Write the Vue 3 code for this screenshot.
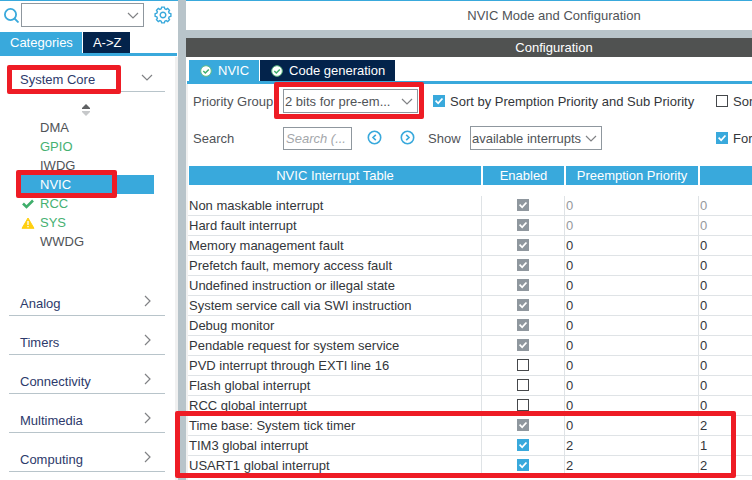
<script setup>
import { ref } from 'vue'

const coreItems = [
  { name: 'DMA' },
  { name: 'GPIO', used: true },
  { name: 'IWDG' },
  { name: 'NVIC', selected: true },
  { name: 'RCC', used: true, icon: 'ok' },
  { name: 'SYS', used: true, icon: 'warn' },
  { name: 'WWDG' },
]
const groups = ['Analog', 'Timers', 'Connectivity', 'Multimedia', 'Computing']

const rows = ref([
  { name: 'Non maskable interrupt', on: true, locked: true, pre: 0, sub: 0, fixed: true },
  { name: 'Hard fault interrupt', on: true, locked: true, pre: 0, sub: 0, fixed: true },
  { name: 'Memory management fault', on: true, locked: true, pre: 0, sub: 0 },
  { name: 'Prefetch fault, memory access fault', on: true, locked: true, pre: 0, sub: 0 },
  { name: 'Undefined instruction or illegal state', on: true, locked: true, pre: 0, sub: 0 },
  { name: 'System service call via SWI instruction', on: true, locked: true, pre: 0, sub: 0 },
  { name: 'Debug monitor', on: true, locked: true, pre: 0, sub: 0 },
  { name: 'Pendable request for system service', on: true, locked: true, pre: 0, sub: 0 },
  { name: 'PVD interrupt through EXTI line 16', on: false, pre: 0, sub: 0 },
  { name: 'Flash global interrupt', on: false, pre: 0, sub: 0 },
  { name: 'RCC global interrupt', on: false, pre: 0, sub: 0 },
  { name: 'Time base: System tick timer', on: true, locked: true, pre: 0, sub: 2 },
  { name: 'TIM3 global interrupt', on: true, pre: 2, sub: 1 },
  { name: 'USART1 global interrupt', on: true, pre: 2, sub: 2 },
])
const sortPriority = ref(true)
const sortName = ref(false)
const force = ref(true)
</script>

<template>
  <div class="app">
    <aside class="side">
      <div class="finder">
        <svg class="lens" viewBox="0 0 15 15" aria-hidden="true">
          <circle cx="6.5" cy="6.5" r="5.6" />
          <path d="M10.5 10.5 L14.5 14.5" />
        </svg>
        <div class="drop find">
          <select aria-label="Find peripheral"><option></option></select>
          <svg class="chev" viewBox="0 0 12 7" aria-hidden="true"><path d="M1 1 L6 6 L11 1" /></svg>
        </div>
        <button class="gear" aria-label="Settings">
          <svg viewBox="-9 -9 18 18" aria-hidden="true">
            <path d="M-1.3 -7.9 L1.3 -7.9 L1.8 -6.2 L3.2 -5.6 L4.7 -6.5 L6.5 -4.7 L5.6 -3.2 L6.2 -1.8 L7.9 -1.3 L7.9 1.3 L6.2 1.8 L5.6 3.2 L6.5 4.7 L4.7 6.5 L3.2 5.6 L1.8 6.2 L1.3 7.9 L-1.3 7.9 L-1.8 6.2 L-3.2 5.6 L-4.7 6.5 L-6.5 4.7 L-5.6 3.2 L-6.2 1.8 L-7.9 1.3 L-7.9 -1.3 L-6.2 -1.8 L-5.6 -3.2 L-6.5 -4.7 L-4.7 -6.5 L-3.2 -5.6 L-1.8 -6.2 Z" />
            <circle r="2.8" />
          </svg>
        </button>
      </div>
      <div class="tabs side-tabs">
        <button class="tab active">Categories</button>
        <button class="tab">A-&gt;Z</button>
      </div>
      <nav class="tree">
        <button class="group">
          <span>System Core</span>
          <svg class="chev" viewBox="0 0 12 7" aria-hidden="true"><path d="M1 1 L6 6 L11 1" /></svg>
          <i class="mark mark-core"></i>
        </button>
        <div class="sorter">
          <svg viewBox="0 0 10 12" aria-hidden="true">
            <path d="M5 0 L9 4 V5 H1 V4 Z" fill="#5f6163" />
            <path d="M5 12 L9 8 V7 H1 V8 Z" fill="#c6c8ca" />
          </svg>
        </div>
        <ul class="items">
          <li v-for="it in coreItems" :key="it.name" :class="{ used: it.used, selected: it.selected }">
            <span class="state">
              <svg v-if="it.icon === 'ok'" viewBox="0 0 14 12" aria-hidden="true">
                <path d="M2 5.5 L5.5 9 L12 2.5" fill="none" stroke="#3fae6b" stroke-width="2.6" />
              </svg>
              <svg v-if="it.icon === 'warn'" viewBox="0 0 14 12" aria-hidden="true">
                <path d="M7 1 L13 11.3 H1 Z" fill="#ffcf10" stroke="#ffcf10" stroke-linejoin="round" />
                <path d="M7 4 V8 M7 9 V10.3" stroke="#fff" stroke-width="1.3" />
              </svg>
            </span>
            <a href="#">{{ it.name }}</a>
            <i v-if="it.selected" class="mark mark-item"></i>
          </li>
        </ul>
        <button v-for="g in groups" :key="g" class="group closed">
          <span>{{ g }}</span>
          <svg class="chev-r" viewBox="0 0 7 12" aria-hidden="true"><path d="M1 1 L6 6 L1 11" /></svg>
        </button>
      </nav>
    </aside>
    <div class="splitter"></div>
    <main class="main">
      <h1 class="title">NVIC Mode and Configuration</h1>
      <h2 class="subtitle">Configuration</h2>
      <div class="tabs main-tabs">
        <button v-for="(t, i) in ['NVIC', 'Code generation']" :key="t" class="tab" :class="{ active: i === 0 }">
          <svg class="badge" viewBox="0 0 12 12" aria-hidden="true">
            <circle cx="6" cy="6" r="5.3" fill="#fff" stroke="#62bd83" />
            <path d="M3.3 6 L5.3 8 L8.8 4.4" fill="none" stroke="#3fae6b" stroke-width="1.5" />
          </svg>
          {{ t }}
        </button>
      </div>
      <section class="content">
        <div class="toolbar">
          <label class="name" for="group">Priority Group</label>
          <div class="cell">
            <div class="drop prio">
              <select id="group"><option>2 bits for pre-em...</option></select>
              <svg class="chev" viewBox="0 0 12 7" aria-hidden="true"><path d="M1 1 L6 6 L11 1" /></svg>
              <i class="mark mark-prio"></i>
            </div>
            <label class="check"><input v-model="sortPriority" type="checkbox" />Sort by Premption Priority and Sub Priority</label>
          </div>
          <label class="check"><input v-model="sortName" type="checkbox" />Sor</label>

          <label class="name" for="search">Search</label>
          <div class="cell">
            <input id="search" class="search" type="text" placeholder="Search (..." />
            <div class="steps">
              <button aria-label="Previous">
                <svg viewBox="0 0 15 15" aria-hidden="true"><circle cx="7.5" cy="7.5" r="6.2" /><path d="M8.8 4.8 L6 7.5 L8.8 10.2" /></svg>
              </button>
              <button aria-label="Next">
                <svg viewBox="0 0 15 15" aria-hidden="true"><circle cx="7.5" cy="7.5" r="6.2" /><path d="M6.2 4.8 L9 7.5 L6.2 10.2" /></svg>
              </button>
            </div>
            <label class="show" for="show">Show</label>
            <div class="drop avail">
              <select id="show"><option>available interrupts</option></select>
              <svg class="chev" viewBox="0 0 12 7" aria-hidden="true"><path d="M1 1 L6 6 L11 1" /></svg>
            </div>
          </div>
          <label class="check"><input v-model="force" type="checkbox" />For</label>
        </div>
        <table class="grid">
          <colgroup><col class="c1" /><col class="c2" /><col class="c3" /><col /></colgroup>
          <thead>
            <tr><th>NVIC Interrupt Table</th><th>Enabled</th><th>Preemption Priority</th><th></th></tr>
          </thead>
          <tbody>
            <tr v-for="r in rows" :key="r.name" :class="{ fixed: r.fixed }">
              <td>{{ r.name }}</td>
              <td><div class="mid"><input v-model="r.on" type="checkbox" :disabled="r.locked" :aria-label="r.name" /></div></td>
              <td class="num">{{ r.pre }}</td>
              <td class="num">{{ r.sub }}</td>
            </tr>
          </tbody>
        </table>
        <i class="mark mark-rows"></i>
      </section>
    </main>
  </div>
</template>

<style>
body {
  background: #fff;
  overflow: hidden;
}
</style>

<style scoped>
.app {
  display: flex;
  min-height: 100vh;
  overflow-x: clip;
  font: 13px/19px "Liberation Sans", Arial, sans-serif;
  color: #33363a;
  white-space: nowrap;
}
button, select, input {
  font: inherit;
  color: inherit;
  margin: 0;
  padding: 0;
  border: 0;
  border-radius: 0;
  background: none;
  box-sizing: border-box;
}
svg { display: block; flex: none; }

.side {
  width: 178px;
  flex: none;
  box-sizing: border-box;
  border-top: 1px solid #39a9dc;
  display: flex;
  flex-direction: column;
}
.finder {
  display: flex;
  align-items: center;
  padding: 2px 0 5px 4px;
}
.lens {
  width: 15px;
  height: 15px;
  margin-right: 2px;
  fill: none;
  stroke: #39a9dc;
  stroke-width: 1.8;
}
.drop {
  position: relative;
  display: flex;
  align-items: center;
}
.drop select {
  appearance: none;
  width: 100%;
  height: 24px;
  padding-left: 1px;
  border: 1px solid #8f979e;
  color: #505357;
}
.drop .chev {
  position: absolute;
  right: 5px;
}
.chev { width: 12px; height: 7px; }
.chev-r { width: 7px; height: 12px; }
.chev, .chev-r {
  fill: none;
  stroke: #808285;
  stroke-width: 1.2;
}
.find { width: 123px; }
.gear { margin-left: 10px; }
.gear svg {
  width: 18px;
  height: 18px;
  fill: none;
  stroke: #39a9dc;
  stroke-width: 1.4;
}

.tabs {
  display: flex;
  gap: 1px;
  border-bottom: 3px solid #39a9dc;
}
.tab {
  height: 21px;
  display: flex;
  align-items: center;
  gap: 6px;
  background: #03234b;
  color: #fff;
}
.tab.active { background: #39a9dc; }
.side-tabs { margin-right: 1px; }
.side-tabs .tab { padding: 0 9px 0 10px; }

.tree {
  flex: 1;
  margin-top: 1px;
  padding: 10px 10px 0 9px;
  border-right: 3px solid #f0f0f0;
}
.group {
  position: relative;
  width: 100%;
  height: 25px;
  padding: 0 12px 0 11px;
  display: flex;
  align-items: center;
  justify-content: space-between;
  border-bottom: 1px solid #b8c4ca;
  color: #2d3a6b;
}
.group .chev { margin-bottom: 3px; }
.group .chev-r { margin: 0 2px 4px 0; }
.closed + .closed { margin-top: 14px; }
.sorter {
  display: flex;
  justify-content: center;
  padding: 12px 2px 2px 0;
}
.sorter svg { width: 10px; height: 12px; }
.items {
  list-style: none;
  margin: 0 0 40px 11px;
  padding: 0 11px 0 0;
}
.items li {
  position: relative;
  height: 19px;
  display: flex;
  align-items: center;
}
.items a {
  color: #505357;
  text-decoration: none;
}
.state { width: 20px; }
.state svg { width: 14px; height: 12px; margin-left: 1px; }
.items .used a { color: #46b172; }
.items .selected { background: #39a9dc; }
.items .selected a { color: #fff; }

.splitter {
  width: 8px;
  flex: none;
  background: #b8c4ca;
}
.main {
  flex: 1;
  min-width: 0;
  display: flex;
  flex-direction: column;
}
.title, .subtitle {
  margin: 0;
  padding-left: 170px;
  font-size: 13px;
  font-weight: 400;
  text-align: center;
}
.title {
  border-top: 1px solid #39a9dc;
  line-height: 29px;
  border-bottom: 8px solid #b8c4ca;
  color: #505357;
}
.subtitle {
  line-height: 19px;
  background: #505251;
  color: #fff;
}
.main-tabs {
  margin-left: 1px;
  padding: 3px 0 0 2px;
}
.badge { width: 12px; height: 12px; }
.main-tabs .tab { padding: 0 10px 0 11px; }

.content {
  position: relative;
  flex: 1;
  border-left: 2px solid #f0f0f0;
}
.toolbar {
  display: grid;
  grid-template-columns: 90px 1fr 36px;
  grid-auto-rows: 24px;
  row-gap: 13px;
  align-items: center;
  padding: 5px 0 16px 5px;
}
.name, .show { color: #505357; }
.cell {
  display: flex;
  align-items: center;
}
.prio { width: 135px; margin-right: 15px; }
.avail { width: 132px; }
.show { width: 42px; }
.check {
  display: flex;
  align-items: center;
  gap: 5px;
}
.search {
  width: 69px;
  height: 23px;
  padding: 0 2px;
  border: 1px solid #8f979e;
}
.search::placeholder {
  color: #a4a7ab;
  font-style: italic;
  opacity: 1;
}
.steps {
  display: flex;
  gap: 18px;
  margin: 0 13px 2px 15px;
}
.steps svg {
  width: 15px;
  height: 15px;
  fill: none;
  stroke: #39a9dc;
  stroke-width: 1.6;
}

input[type="checkbox"] {
  appearance: none;
  width: 12px;
  height: 12px;
  flex: none;
  display: grid;
  place-items: start center;
  border: 1px solid #45484b;
  background: #fff;
}
input[type="checkbox"]:checked {
  border-color: #39a9dc;
  background: #39a9dc;
}
input[type="checkbox"]:checked:disabled {
  border-color: #8f979e;
  background: #8f979e;
}
input[type="checkbox"]:checked::after {
  content: "";
  width: 10px;
  height: 10px;
  background: #fff;
  clip-path: polygon(10% 53%, 22% 41%, 41% 61%, 78% 19%, 91% 31%, 42% 86%);
}

.grid {
  width: 100%;
  table-layout: fixed;
  border-collapse: separate;
  border-spacing: 0;
}
.c1 { width: 294px; }
.c2 { width: 83px; }
.c3 { width: 134px; }
.grid th {
  height: 19px;
  padding: 0;
  border: solid #fff;
  border-width: 0 1px;
  background: #39a9dc;
  color: #fff;
  font-weight: 400;
}
.grid th:last-child { border-right: 0; }
.grid tbody::before {
  content: "";
  display: block;
  height: 11px;
}
.grid td {
  height: 19px;
  padding: 0 1px;
  border: solid #dfe3e6;
  border-width: 0 1px 1px 0;
  overflow: hidden;
}
.grid td:last-child { border-right: 0; }
.mid {
  display: flex;
  justify-content: center;
  padding-bottom: 1px;
}
.fixed .num { color: #95999d; }

.mark {
  position: absolute;
  z-index: 2;
  box-sizing: border-box;
  border: 5px solid #ee1c25;
  border-radius: 2px;
  pointer-events: none;
}
.mark-core { left: -2px; top: -2px; width: 114px; height: 29px; }
.mark-item { left: -4px; top: -5px; width: 101px; height: 28px; }
.mark-prio { left: -9px; top: -7px; width: 150px; height: 37px; }
.mark-rows { left: -13px; bottom: 2px; width: 561px; height: 67px; }
</style>
